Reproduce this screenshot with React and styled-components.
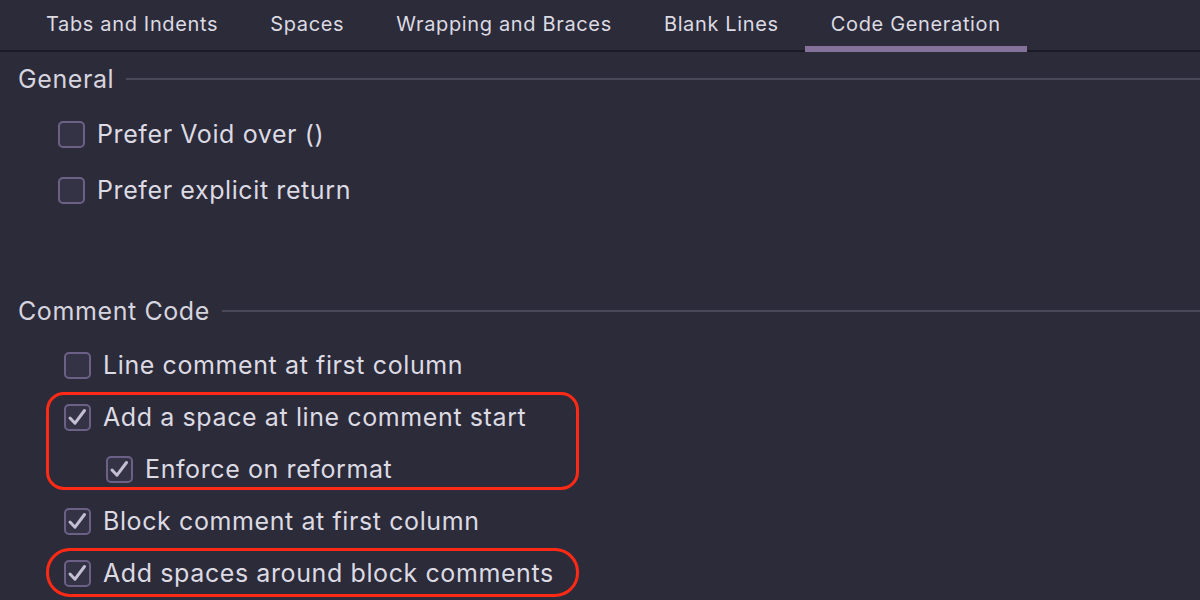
import React from "react";
import styled, { createGlobalStyle } from "styled-components";

const GlobalStyle = createGlobalStyle`
  html, body {
    margin: 0;
    padding: 0;
    background: #2c2b39;
  }
  body {
    font-family: Inter, "Noto Sans", sans-serif;
    color: #dcdae3;
    -webkit-font-smoothing: antialiased;
  }
`;

const tabs = [
	"Tabs and Indents",
	"Spaces",
	"Wrapping and Braces",
	"Blank Lines",
	"Code Generation",
];

const Page = styled.div`
  width: 1200px;
  height: 600px;
  overflow: hidden;
  background: #2c2b39;
`;

const TabBar = styled.div`
  display: flex;
  height: 52px;
  padding-left: 20px;
  box-shadow: inset 0 -2px 0 #1c1b25;
`;

const Tab = styled.div`
  display: flex;
  align-items: flex-start;
  padding: 12px 26px 0;
  font-size: 20px;
  letter-spacing: 0.65px;
  color: #dcdae3;
  white-space: nowrap;
  box-shadow: ${p => (p.$active ? "inset 0 -6px 0 #85729a" : "none")};
`;

const Content = styled.div`
  padding-left: 18px;
`;

const SectionHeader = styled.div`
  display: flex;
  align-items: center;
  gap: 12px;
  height: 40px;
  margin-top: ${p => p.$top}px;
  font-size: 25px;
  letter-spacing: 0.6px;
  color: #d6d4de;

  &::after {
    content: "";
    flex: 1;
    height: 2px;
    background: #4a4859;
  }
`;

const Rows = styled.div`
  display: flex;
  flex-direction: column;
  margin-top: ${p => p.$top}px;
  padding-left: ${p => p.$indent}px;
`;

const Row = styled.div`
  display: flex;
  align-items: center;
  gap: 12px;
  height: ${p => p.$height}px;
  padding-left: ${p => p.$nested || 0}px;
  font-size: 25px;
  letter-spacing: 0.6px;
  white-space: nowrap;
`;

const Box = styled.span`
  display: inline-flex;
  align-items: center;
  justify-content: center;
  flex-shrink: 0;
  box-sizing: border-box;
  width: 27px;
  height: 27px;
  border: 2px solid #6c6087;
  border-radius: 5px;
  background: #343346;
`;

const Highlight = styled.div`
  position: relative;

  &::after {
    content: "";
    position: absolute;
    left: -18px;
    width: 533px;
    top: 1px;
    bottom: ${p => p.$bottom}px;
    box-sizing: border-box;
    border: 3px solid #ff2a16;
    border-radius: ${p => p.$radius}px;
    pointer-events: none;
  }
`;

const Checkbox = ({ checked }) => (
	<Box>
		{checked && (
			<svg width="23" height="23" viewBox="0 0 23 23">
				<path d="M4 12 L9 17.2 L18.5 4.5" fill="none" stroke="#c4bfd3" strokeWidth="3" strokeLinecap="round" strokeLinejoin="round" />
			</svg>
		)}
	</Box>
);

const Option = ({ label, checked, height, nested }) => (
	<Row $height={height} $nested={nested}>
		<Checkbox checked={checked} />
		<span>{label}</span>
	</Row>
);

const App = () => {
	return (
		<Page>
			<GlobalStyle />
			<TabBar>
				{tabs.map(t => (
					<Tab key={t} $active={t === "Code Generation"}>{t}</Tab>
				))}
			</TabBar>
			<Content>
				<SectionHeader $top={7}>General</SectionHeader>
				<Rows $top={7} $indent={40}>
					<Option label="Prefer Void over ()" height={56} />
					<Option label="Prefer explicit return" height={56} />
				</Rows>

				<SectionHeader $top={73}>Comment Code</SectionHeader>
				<Rows $top={8} $indent={46}>
					<Option label="Line comment at first column" height={52} />
					<Highlight $bottom={5} $radius={18}>
						<Option label="Add a space at line comment start" checked height={52} />
						<Option label="Enforce on reformat" checked height={52} nested={42} />
					</Highlight>
					<Option label="Block comment at first column" checked height={52} />
					<Highlight $bottom={2} $radius={24}>
						<Option label="Add spaces around block comments" checked height={52} />
					</Highlight>
				</Rows>
			</Content>
		</Page>
	);
};

export default App;
